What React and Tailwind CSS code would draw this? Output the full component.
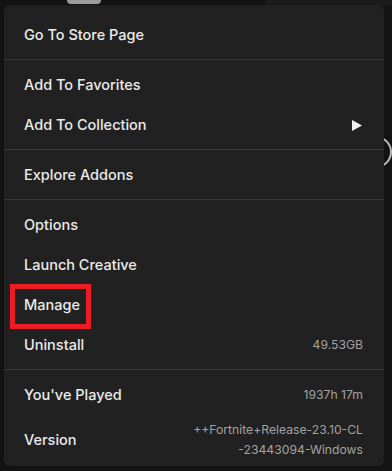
export default function App() {
  const Item = ({ label, right, arrow }) => (
    <div className="flex h-10 items-center justify-between pl-5 pr-[21px]">
      <span className="text-[14.5px] font-medium text-[#ebebeb]">{label}</span>
      {right && <span className="text-[12.2px] text-[#a3a3a3]">{right}</span>}
      {arrow && (
        <svg width="10" height="11" viewBox="0 0 10 11" className="mr-[1px]">
          <path d="M0 0 L10 5.5 L0 11 Z" fill="#f2f2f2" />
        </svg>
      )}
    </div>
  );

  const Section = ({ children, last }) => (
    <div className={last ? "pt-[5px]" : "border-b border-[#3a3a3a] pb-[4px] pt-[5px]"}>
      {children}
    </div>
  );

  return (
    <div
      className="relative h-[471px] w-[392px] overflow-hidden bg-[#131313]"
      style={{ fontFamily: "Inter, 'Noto Sans', sans-serif" }}
    >
      {/* background bits behind the menu */}
      <div className="absolute left-[67px] top-[-6px] h-[10px] w-[34px] rounded-[4px] bg-[#9c9c9c]" />
      <div className="absolute left-[266px] top-0 h-[6px] w-[126px] bg-[#1b1b1b]" />
      <div className="absolute left-[360px] top-[136px] h-[32px] w-[32px] rounded-full border-2 border-[#bdbdbd]" />

      {/* Menu */}
      <div className="relative ml-[4px] mt-[5px] w-[380px] rounded-md bg-[#212121] pt-[5px]">

        <Section>
          <Item label="Go To Store Page" />
        </Section>

        <Section>
          <Item label="Add To Favorites" />
          <Item label="Add To Collection" arrow />
        </Section>

        <Section>
          <Item label="Explore Addons" />
        </Section>

        <Section>
          <Item label="Options" />
          <Item label="Launch Creative" />
          <Item label="Manage" />
          <Item label="Uninstall" right="49.53GB" />
        </Section>

        <Section last>
          <Item label="You've Played" right="1937h 17m" />
          <div className="flex items-center justify-between pb-[6px] pl-5 pr-[21px] pt-[5px]">
            <span className="text-[14.5px] font-medium text-[#ebebeb]">Version</span>
            <div className="text-right text-[12.2px] leading-5 text-[#a3a3a3]">
              <div>++Fortnite+Release-23.10-CL</div>
              <div>-23443094-Windows</div>
            </div>
          </div>
        </Section>
      </div>

      {/* annotation box */}
      <div className="absolute left-[10px] top-[284px] h-[45px] w-[81px] border-[5px] border-[#ec1c24]" />
    </div>
  );
}
